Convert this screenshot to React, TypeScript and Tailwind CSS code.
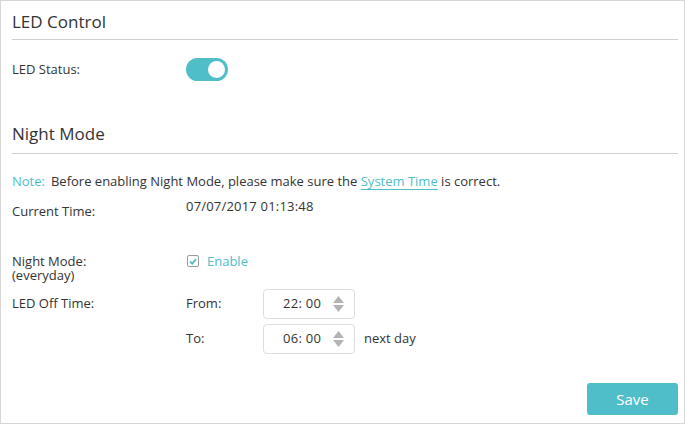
import React, { useState } from 'react';

const teal = '#4fbec9';

function Toggle({ on, onChange }: { on: boolean; onChange: () => void }) {
  return (
    <button
      type="button"
      onClick={onChange}
      className={`relative w-[42px] h-[23px] rounded-full ${on ? 'bg-[#4fbec9]' : 'bg-[#ccc]'}`}
    >
      <span
        className={`absolute top-[3px] w-[17px] h-[17px] rounded-full bg-white ${on ? 'left-[22px]' : 'left-[3px]'}`}
      />
    </button>
  );
}

function TimeBox({ value }: { value: string }) {
  return (
    <div className="w-[92px] h-[30px] border border-[#dedede] rounded-[4px] flex items-center pl-[19px] pr-[10px] bg-white">
      <span className="text-[13px] text-[#333] tracking-[0.3px]">{value}</span>
      <span className="ml-auto flex flex-col items-center gap-[2px]">
        <svg width="11" height="7" viewBox="0 0 11 7">
          <path d="M5.5 0 L11 7 L0 7 Z" fill="#b3b3b3" />
        </svg>
        <svg width="11" height="7" viewBox="0 0 11 7">
          <path d="M0 0 L11 0 L5.5 7 Z" fill="#b3b3b3" />
        </svg>
      </span>
    </div>
  );
}

export default function App() {
  const [ledOn, setLedOn] = useState(true);
  const [nightOn, setNightOn] = useState(true);

  return (
    <div
      className="w-[685px] h-[424px] bg-white border border-[#d6d6d6] text-[#333] text-[13px]"
      style={{ fontFamily: '"Open Sans", Arial, sans-serif' }}
    >
      <div className="pl-[11px] pr-[6px]">
        <h2 className="text-[17px] leading-[22px] pt-[10px] pb-[6px]">LED Control</h2>
        <div className="border-t border-[#d0d0d0]" />

        <div className="flex items-center h-[23px] mt-[18px]">
          <div className="w-[174px]">LED Status:</div>
          <Toggle on={ledOn} onChange={() => setLedOn(!ledOn)} />
        </div>

        <h2 className="text-[17px] leading-[22px] mt-[42px] pb-[8px]">Night Mode</h2>
        <div className="border-t border-[#d0d0d0]" />

        <p className="mt-[18px] leading-[18px]">
          <span style={{ color: teal }}>Note:</span>
          <span className="ml-[6px]">Before enabling Night Mode, please make sure the </span>
          <a href="#" className="underline underline-offset-[3px]" style={{ color: teal }}>
            System Time
          </a>{' '}
          is correct.
        </p>

        <div className="flex mt-[7px] leading-[18px]">
          <div className="w-[174px] pt-[5px]">Current Time:</div>
          <div className="tracking-[0.2px]">07/07/2017 01:13:48</div>
        </div>

        <div className="flex mt-[34px]">
          <div className="w-[174px] leading-[14px]">
            Night Mode:
            <br />
            (everyday)
          </div>
          <label className="flex items-center gap-[8px] cursor-pointer h-[14px] leading-[14px]">
            <span
              onClick={() => setNightOn(!nightOn)}
              className="w-[12px] h-[12px] border border-[#9a9a9a] rounded-[2px] flex items-center justify-center ml-[1px]"
            >
              {nightOn && (
                <svg width="8" height="7" viewBox="0 0 8 7">
                  <path d="M1 3.5 L3.2 5.6 L7 1.2" stroke={teal} strokeWidth="1.8" fill="none" />
                </svg>
              )}
            </span>
            <span style={{ color: teal }}>Enable</span>
          </label>
        </div>

        <div className="flex mt-[7px]">
          <div className="w-[174px] h-[30px] flex items-center">LED Off Time:</div>
          <div className="flex flex-col gap-[5px]">
            <div className="flex items-center">
              <div className="w-[77px]">From:</div>
              <TimeBox value="22: 00" />
            </div>
            <div className="flex items-center">
              <div className="w-[77px]">To:</div>
              <TimeBox value="06: 00" />
              <span className="ml-[9px]">next day</span>
            </div>
          </div>
        </div>

        <div className="flex justify-end mt-[29px]">
          <button
            type="button"
            className="w-[91px] h-[32px] rounded-[3px] text-white text-[15px] bg-[#4fbec9]"
          >
            Save
          </button>
        </div>
      </div>
    </div>
  );
}
